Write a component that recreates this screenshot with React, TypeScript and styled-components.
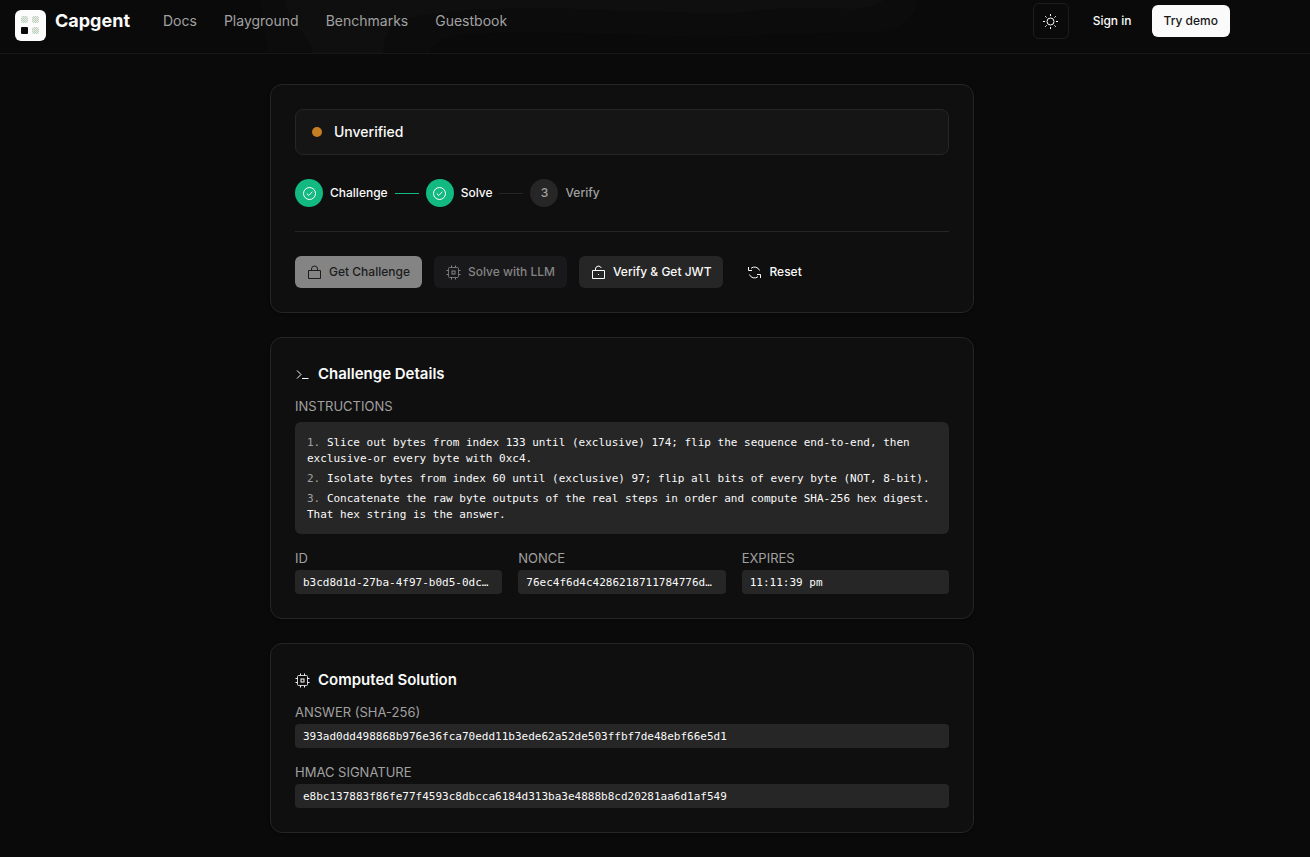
import React from 'react';
import styled, { createGlobalStyle } from 'styled-components';

const GlobalStyle = createGlobalStyle`
  *, *::before, *::after { box-sizing: border-box; }
  body {
    margin: 0;
    background: #0a0a0a;
    color: #fafafa;
    font-family: Inter, "Liberation Sans", sans-serif;
    font-size: 14px;
    line-height: 20px;
  }
  h2, p, ol, dl, dd { margin: 0; padding: 0; }
  button { font-family: inherit; }
`;

const MONO = '"DejaVu Sans Mono", "Liberation Mono", monospace';

const Page = styled.div`
  min-height: 100vh;
  padding-bottom: 24px;
`;

const Header = styled.header`
  position: relative;
  isolation: isolate;
  display: flex;
  align-items: flex-start;
  justify-content: space-between;
  height: 54px;
  padding: 3px 80px 0 15px;
  overflow: hidden;
  border-bottom: 1px solid #171717;
`;

const GlowArt = styled.svg`
  position: absolute;
  z-index: -1;
  top: 0;
  left: 260px;
`;

const HeaderGroup = styled.div`
  display: flex;
  align-items: center;
  height: 36px;
`;

const Brand = styled.a`
  display: flex;
  align-items: center;
  gap: 9px;
  color: #fafafa;
  text-decoration: none;
  font-size: 18px;
  font-weight: 700;
  line-height: 24px;

  svg { margin-top: 8px; }
`;

const Nav = styled.nav`
  display: flex;
  gap: 27px;
  margin-left: 33px;
`;

const NavLink = styled.a`
  color: #a1a1a1;
  font-size: 14px;
  text-decoration: none;
`;

const ThemeButton = styled.button`
  display: grid;
  place-items: center;
  width: 36px;
  height: 36px;
  padding: 0;
  border: 1px solid #1d1d1d;
  border-radius: 6px;
  background: transparent;
  color: #fafafa;
`;

const SignIn = styled.a`
  margin: 0 20px 0 24px;
  color: #fafafa;
  font-size: 12px;
  font-weight: 500;
  text-decoration: none;
`;

const buttonColors = {
  primary: 'background: #fafafa; color: #171717;',
  primaryDim: 'background: #848484; color: #1c1c1c;',
  secondaryDim: 'background: #19191b; color: #848484;',
  secondary: 'background: #262626; color: #fafafa;',
  ghost: 'background: transparent; color: #fafafa;',
};

const Button = styled.button<{ $tone: keyof typeof buttonColors }>`
  display: inline-flex;
  align-items: center;
  gap: 7px;
  height: 32px;
  padding: 0 12px;
  border: 0;
  border-radius: 6px;
  font-size: 12px;
  font-weight: 500;
  line-height: 16px;
  white-space: nowrap;
  ${({ $tone }) => buttonColors[$tone]}
`;

const Main = styled.main`
  display: flex;
  flex-direction: column;
  gap: 24px;
  max-width: 704px;
  margin: 30px auto 0;
`;

const Content = styled.div`
  padding: 0 66px 0 0;
`;

const Card = styled.section`
  padding: 24px;
  border: 1px solid #262626;
  border-radius: 12px;
  background: #0f0f0f;
  box-shadow: 0 1px 3px rgba(0, 0, 0, 0.4);
`;

const Status = styled.div`
  display: flex;
  align-items: center;
  gap: 12px;
  height: 46px;
  padding: 0 16px;
  border: 1px solid #262626;
  border-radius: 8px;
  background: #151515;
  font-weight: 500;

  &::before {
    content: "";
    width: 10px;
    height: 10px;
    border-radius: 50%;
    background: #c77d22;
  }
`;

const Steps = styled.div`
  display: flex;
  align-items: center;
  gap: 7px;
  margin-top: 24px;
  padding-bottom: 24px;
  border-bottom: 1px solid #262626;
`;

const StepMark = styled.span<{ $done?: boolean }>`
  display: grid;
  place-items: center;
  width: 28px;
  height: 28px;
  border-radius: 50%;
  background: ${({ $done }) => ($done ? '#12b981' : '#262626')};
  color: ${({ $done }) => ($done ? '#ffffff' : '#a1a1a1')};
  font-size: 12px;
  font-weight: 500;
`;

const StepName = styled.span<{ $done?: boolean }>`
  color: ${({ $done }) => ($done ? '#fafafa' : '#a1a1a1')};
  font-size: 12px;
  font-weight: 500;
`;

const StepLine = styled.span<{ $done?: boolean }>`
  width: 24px;
  height: 1px;
  background: ${({ $done }) => ($done ? '#12b981' : '#262626')};
`;

const Actions = styled.div`
  display: flex;
  flex-wrap: wrap;
  gap: 12px;
  margin-top: 24px;
`;

const Title = styled.h2`
  display: flex;
  align-items: center;
  gap: 8px;
  font-size: 15px;
  font-weight: 600;
  line-height: 24px;
`;

const Label = styled.dt`
  color: #a1a1a1;
  font-size: 13px;
  font-weight: 400;
  line-height: 16px;
  text-transform: uppercase;
`;

const Details = styled.dl`
  display: flex;
  flex-direction: column;
  gap: 16px;
  margin-top: 12px;
`;

const Columns = styled.div`
  display: grid;
  grid-template-columns: repeat(3, minmax(0, 1fr));
  gap: 16px;
`;

const Value = styled.dd`
  height: 24px;
  margin-top: 4px;
  padding: 5px 8px 3px;
  overflow: hidden;
  border-radius: 4px;
  background: #262626;
  font-family: ${MONO};
  font-size: 11px;
  line-height: 16px;
  text-overflow: ellipsis;
  white-space: nowrap;
`;

const Instructions = styled.dd`
  margin-top: 8px;
  padding: 13px 12px 11px;
  border-radius: 6px;
  background: #262626;
  font-family: ${MONO};
  font-size: 11px;
  line-height: 16px;

  ol { list-style: decimal inside; }
  li + li { margin-top: 4px; }
  li::marker { color: #a1a1a1; }
`;

const Logo = () => (
  <svg width="31" height="31" viewBox="0 0 31 31" aria-hidden="true">
    <defs>
      <pattern id="weave" width="2" height="2" patternUnits="userSpaceOnUse">
        <rect width="2" height="2" fill="#e6efe9" />
        <rect width="1" height="1" fill="#b2d2c1" />
        <rect x="1" y="1" width="1" height="1" fill="#cfc9b4" />
      </pattern>
    </defs>
    <rect width="31" height="31" rx="6" fill="#fcfcfc" />
    <g fill="url(#weave)">
      <rect x="6" y="6" width="7" height="7" rx="2" />
      <rect x="17" y="6" width="7" height="7" rx="2" />
      <rect x="17" y="17" width="7" height="7" rx="2" />
    </g>
    <rect x="6" y="17" width="7" height="7" rx="1" fill="#0a0a0a" />
  </svg>
);

const Glow = () => (
  <GlowArt width="660" height="53" viewBox="0 0 660 53" aria-hidden="true">
    <path
      d="M0 0C2 20 8 36 6 53H170C172 42 184 36 214 34C300 30 380 36 450 37C520 36 560 32 610 33C640 32 656 18 658 0Z"
      fill="#0c0c0c"
    />
    <path
      d="M24 0C30 26 50 34 52 53H123C124 38 128 22 150 18C190 8 280 6 360 11C420 10 450 16 480 13C520 6 560 8 592 9C610 8 620 4 624 0Z"
      fill="#0f0f0f"
    />
  </GlowArt>
);

const Icon = ({ children }: { children: React.ReactNode }) => (
  <svg width="15" height="15" viewBox="0 0 15 15" fill="none" stroke="currentColor" strokeWidth="1" aria-hidden="true">
    {children}
  </svg>
);

const SunIcon = () => (
  <Icon>
    <circle cx="7.500" cy="7.500" r="3.500" />
    <path d="M7.500 0v2M7.500 13v2M0 7.500h2M13 7.500h2M2.200 2.200l1.400 1.400M11.400 11.400l1.400 1.400M2.200 12.800l1.400-1.400M11.400 3.600l1.400-1.400" />
  </Icon>
);

const CheckIcon = () => (
  <Icon>
    <circle cx="7.500" cy="7.500" r="6" />
    <path d="M4.800 7.600l2 1.900 3.600-3.800" />
  </Icon>
);

const LockIcon = () => (
  <Icon>
    <path d="M1.500 5.500h12v8h-12zM4.500 5.500V4a3 3 0 0 1 6 0v1.500" />
  </Icon>
);

const UnlockIcon = () => (
  <Icon>
    <path d="M1.500 5.500h12v8h-12zM4.500 5.500V4a3 3 0 0 1 5.800-1M7 9.500h1" />
  </Icon>
);

const ChipIcon = () => (
  <Icon>
    <rect x="2.500" y="2.500" width="10" height="10" rx="1" strokeOpacity="0.8" />
    <rect x="6" y="6" width="3" height="3" />
    <path d="M5.500 0.500v2M9.500 0.500v2M5.500 12.500v2M9.500 12.500v2M0.500 5.500h2M0.500 9.500h2M12.500 5.500h2M12.500 9.500h2" />
  </Icon>
);

const ResetIcon = () => (
  <Icon>
    <path d="M1.500 2v3.500h3.500M4 3.300A5.500 5.500 0 0 1 12.600 5.500M13.500 13V9.500H10M11 11.700A5.500 5.500 0 0 1 2.400 9.500" />
  </Icon>
);

const TerminalIcon = () => (
  <Icon>
    <path d="M2 3.500l4 4-4 4M7 11.500h6.500" />
  </Icon>
);

const App = () => (
  <Page>
    <GlobalStyle />
    <Header>
      <Glow />
      <HeaderGroup>
        <Brand href="#home">
          <Logo />
          Capgent
        </Brand>
        <Nav>
          <NavLink href="#docs">Docs</NavLink>
          <NavLink href="#playground">Playground</NavLink>
          <NavLink href="#benchmarks">Benchmarks</NavLink>
          <NavLink href="#guestbook">Guestbook</NavLink>
        </Nav>
      </HeaderGroup>
      <HeaderGroup>
        <ThemeButton type="button" aria-label="Toggle theme">
          <SunIcon />
        </ThemeButton>
        <SignIn href="#sign-in">Sign in</SignIn>
        <Button type="button" $tone="primary">Try demo</Button>
      </HeaderGroup>
    </Header>

    <Content>
      <Main>
        <Card>
          <Status role="status">Unverified</Status>
          <Steps>
            <StepMark $done><CheckIcon /></StepMark>
            <StepName $done>Challenge</StepName>
            <StepLine $done />
            <StepMark $done><CheckIcon /></StepMark>
            <StepName $done>Solve</StepName>
            <StepLine />
            <StepMark>3</StepMark>
            <StepName>Verify</StepName>
          </Steps>
          <Actions>
            <Button type="button" $tone="primaryDim" disabled><LockIcon />Get Challenge</Button>
            <Button type="button" $tone="secondaryDim" disabled><ChipIcon />Solve with LLM</Button>
            <Button type="button" $tone="secondary"><UnlockIcon />Verify &amp; Get JWT</Button>
            <Button type="button" $tone="ghost"><ResetIcon />Reset</Button>
          </Actions>
        </Card>

        <Card>
          <Title><TerminalIcon />Challenge Details</Title>
          <Details>
            <div>
              <Label>Instructions</Label>
              <Instructions>
                <ol>
                  <li>Slice out bytes from index 133 until (exclusive) 174; flip the sequence end-to-end, then exclusive-or every byte with 0xc4.</li>
                  <li>Isolate bytes from index 60 until (exclusive) 97; flip all bits of every byte (NOT, 8-bit).</li>
                  <li>Concatenate the raw byte outputs of the real steps in order and compute SHA-256 hex digest. That hex string is the answer.</li>
                </ol>
              </Instructions>
            </div>
            <Columns>
              <div>
                <Label>ID</Label>
                <Value>b3cd8d1d-27ba-4f97-b0d5-0dc…</Value>
              </div>
              <div>
                <Label>Nonce</Label>
                <Value>76ec4f6d4c4286218711784776d…</Value>
              </div>
              <div>
                <Label>Expires</Label>
                <Value>11:11:39 pm</Value>
              </div>
            </Columns>
          </Details>
        </Card>

        <Card>
          <Title><ChipIcon />Computed Solution</Title>
          <Details>
            <div>
              <Label>Answer (SHA-256)</Label>
              <Value>393ad0dd498868b976e36fca70edd11b3ede62a52de503ffbf7de48ebf66e5d1</Value>
            </div>
            <div>
              <Label>HMAC Signature</Label>
              <Value>e8bc137883f86fe77f4593c8dbcca6184d313ba3e4888b8cd20281aa6d1af549</Value>
            </div>
          </Details>
        </Card>
      </Main>
    </Content>
  </Page>
);

export default App;
